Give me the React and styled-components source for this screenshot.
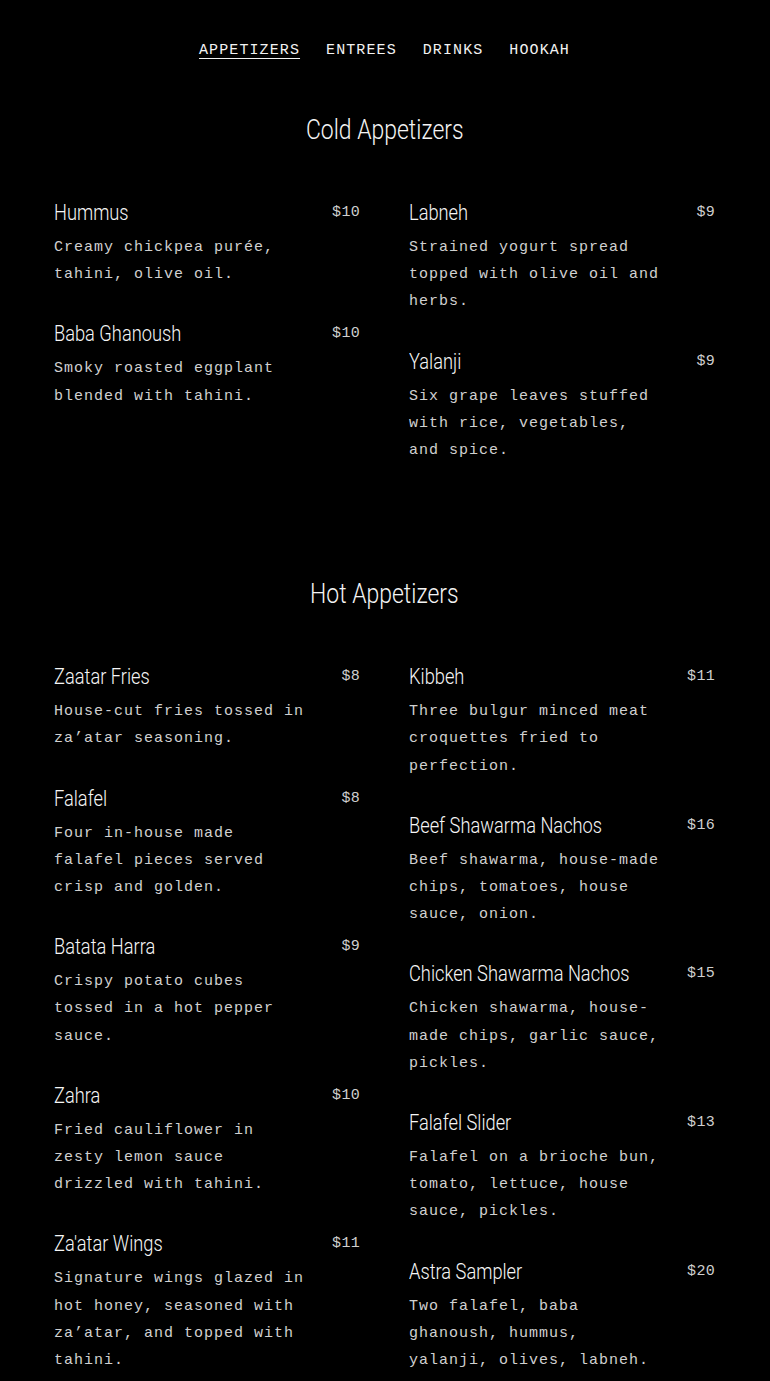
import React from 'react'
import styled, { createGlobalStyle } from 'styled-components'

const GlobalStyle = createGlobalStyle`
  html, body {
    margin: 0;
    padding: 0;
    background: #000;
  }
  * { box-sizing: border-box; }
`

const Page = styled.div`
  background: #000;
  min-height: 1381px;
  padding: 0 55px 40px 54px;
  color: #fff;
`

const Nav = styled.nav`
  display: flex;
  justify-content: center;
  gap: 26px;
  padding-top: 41px;
  margin-bottom: 49px;
`

const NavLink = styled.a`
  font-family: "Liberation Mono", "DejaVu Sans Mono", monospace;
  font-size: 15px;
  line-height: 20px;
  letter-spacing: 1.1px;
  color: #f2f2f2;
  text-decoration: ${props => (props.active ? 'underline' : 'none')};
  text-underline-offset: 4px;
  text-decoration-thickness: 1px;
  cursor: pointer;
`

const Section = styled.section`
  margin-bottom: 110px;
`

const SectionTitle = styled.h2`
  margin: 0 0 48px;
  text-align: center;
  font-family: Roboto, "DejaVu Sans Condensed", sans-serif;
  font-weight: 300;
  font-size: 27px;
  line-height: 40px;
  color: #f4f4f4;

  span {
    display: inline-block;
    transform: scaleX(0.85);
    transform-origin: center;
  }
`

const Columns = styled.div`
  display: grid;
  grid-template-columns: 1fr 1fr;
  column-gap: 49px;
  align-items: start;
`

const Column = styled.div`
  display: flex;
  flex-direction: column;
  gap: 31px;
`

const Item = styled.div`
  display: flex;
  flex-direction: column;
`

const ItemHead = styled.div`
  display: flex;
  justify-content: space-between;
  align-items: center;
  margin-bottom: 6px;
`

const ItemName = styled.div`
  font-family: Roboto, "DejaVu Sans Condensed", sans-serif;
  font-weight: 300;
  font-size: 22px;
  line-height: 30px;
  color: #f6f6f6;
  white-space: nowrap;
  transform: scaleX(0.83);
  transform-origin: left center;
`

const ItemPrice = styled.div`
  font-family: "Liberation Mono", "DejaVu Sans Mono", monospace;
  font-size: 15px;
  line-height: 20px;
  letter-spacing: 0.3px;
  color: #cfcfcf;
`

const ItemDesc = styled.p`
  margin: 0;
  max-width: 255px;
  font-family: "Liberation Mono", "DejaVu Sans Mono", monospace;
  font-size: 15px;
  line-height: 27.2px;
  letter-spacing: 1px;
  color: #d0d0d0;
`

const sections = [
  {
    title: 'Cold Appetizers',
    columns: [
      [
        { name: 'Hummus', price: '$10', desc: 'Creamy chickpea purée, tahini, olive oil.' },
        { name: 'Baba Ghanoush', price: '$10', desc: 'Smoky roasted eggplant blended with tahini.' },
      ],
      [
        { name: 'Labneh', price: '$9', desc: 'Strained yogurt spread topped with olive oil and herbs.' },
        { name: 'Yalanji', price: '$9', desc: 'Six grape leaves stuffed with rice, vegetables, and spice.' },
      ],
    ],
  },
  {
    title: 'Hot Appetizers',
    columns: [
      [
        { name: 'Zaatar Fries', price: '$8', desc: 'House-cut fries tossed in za’atar seasoning.' },
        { name: 'Falafel', price: '$8', desc: 'Four in-house made falafel pieces served crisp and golden.' },
        { name: 'Batata Harra', price: '$9', desc: 'Crispy potato cubes tossed in a hot pepper sauce.' },
        { name: 'Zahra', price: '$10', desc: 'Fried cauliflower in zesty lemon sauce drizzled with tahini.' },
        { name: 'Za\'atar Wings', price: '$11', desc: 'Signature wings glazed in hot honey, seasoned with za’atar, and topped with tahini.' },
      ],
      [
        { name: 'Kibbeh', price: '$11', desc: 'Three bulgur minced meat croquettes fried to perfection.' },
        { name: 'Beef Shawarma Nachos', price: '$16', desc: 'Beef shawarma, house-made chips, tomatoes, house sauce, onion.' },
        { name: 'Chicken Shawarma Nachos', price: '$15', desc: 'Chicken shawarma, house-made chips, garlic sauce, pickles.' },
        { name: 'Falafel Slider', price: '$13', desc: 'Falafel on a brioche bun, tomato, lettuce, house sauce, pickles.' },
        { name: 'Astra Sampler', price: '$20', desc: 'Two falafel, baba ghanoush, hummus, yalanji, olives, labneh.' },
      ],
    ],
  },
]

const navItems = ['APPETIZERS', 'ENTREES', 'DRINKS', 'HOOKAH']

const MenuItem = ({ name, price, desc }) => (
  <Item>
    <ItemHead>
      <ItemName>{name}</ItemName>
      <ItemPrice>{price}</ItemPrice>
    </ItemHead>
    <ItemDesc>{desc}</ItemDesc>
  </Item>
)

const App = () => {
  return (
    <Page>
      <GlobalStyle />
      <Nav>
        {navItems.map((item, i) => (
          <NavLink key={item} active={i === 0}>{item}</NavLink>
        ))}
      </Nav>
      {sections.map(section => (
        <Section key={section.title}>
          <SectionTitle><span>{section.title}</span></SectionTitle>
          <Columns>
            {section.columns.map((col, ci) => (
              <Column key={ci}>
                {col.map(item => (
                  <MenuItem key={item.name} {...item} />
                ))}
              </Column>
            ))}
          </Columns>
        </Section>
      ))}
    </Page>
  )
}

export default App
